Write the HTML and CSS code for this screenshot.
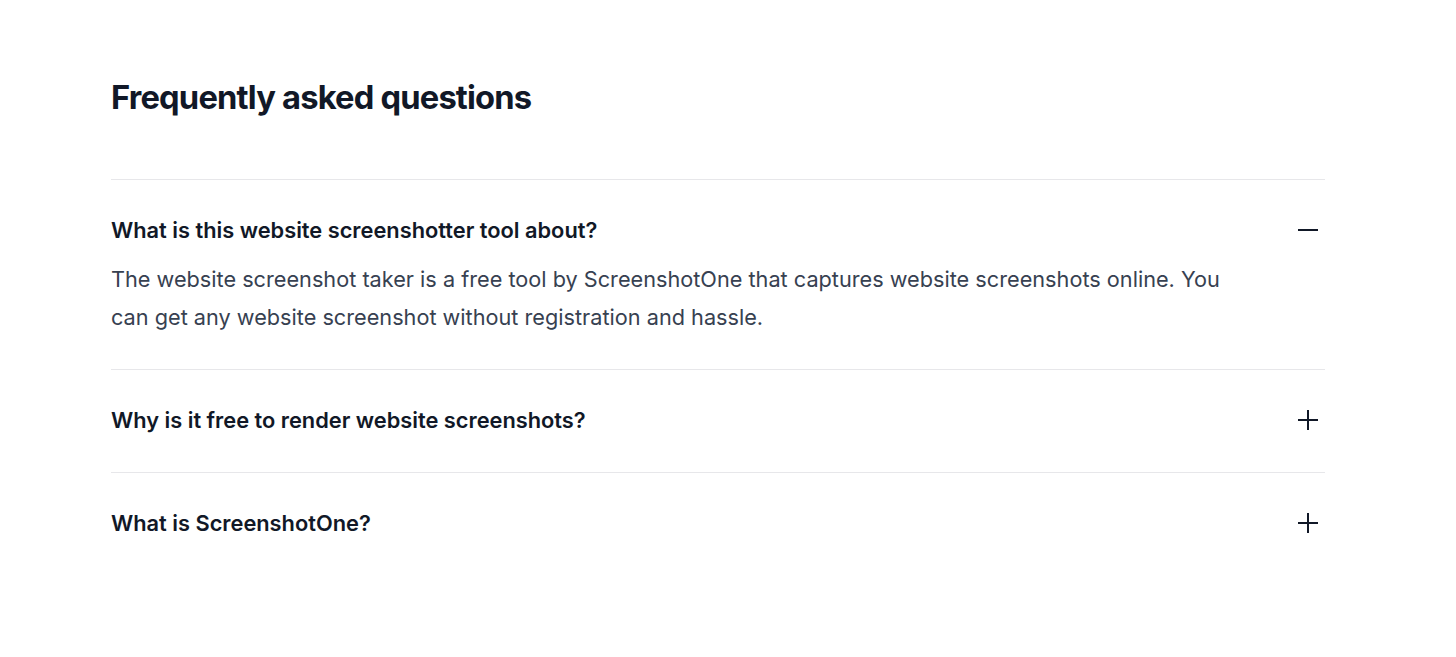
FILE: index.html
```html
<!DOCTYPE html>
<html lang="en">
<head>
<meta charset="utf-8">
<title>FAQ</title>
<link rel="stylesheet" href="styles.css">
</head>
<body>
<section class="faq">
  <h2 class="faq-title">Frequently asked questions</h2>
  <dl class="faq-list">
    <div class="faq-item">
      <dt class="faq-q">
        <span class="faq-q-text">What is this website screenshotter tool about?</span>
        <span class="faq-icon">
          <svg width="20" height="20" viewBox="0 0 20 20" fill="none" stroke="currentColor" stroke-width="2"><path d="M0 10H20"/></svg>
        </span>
      </dt>
      <dd class="faq-a">The website screenshot taker is a free tool by ScreenshotOne that captures website screenshots online. You can get any website screenshot without registration and hassle.</dd>
    </div>
    <div class="faq-item">
      <dt class="faq-q">
        <span class="faq-q-text">Why is it free to render website screenshots?</span>
        <span class="faq-icon">
          <svg width="20" height="20" viewBox="0 0 20 20" fill="none" stroke="currentColor" stroke-width="2"><path d="M0 10H20M10 0V20"/></svg>
        </span>
      </dt>
    </div>
    <div class="faq-item">
      <dt class="faq-q">
        <span class="faq-q-text">What is ScreenshotOne?</span>
        <span class="faq-icon">
          <svg width="20" height="20" viewBox="0 0 20 20" fill="none" stroke="currentColor" stroke-width="2"><path d="M0 10H20M10 0V20"/></svg>
        </span>
      </dt>
    </div>
  </dl>
</section>
</body>
</html>
```
FILE: styles.css
```css
html, body {
  margin: 0;
  padding: 0;
  background: #ffffff;
}
body {
  font-family: Inter, "Noto Sans", "Liberation Sans", sans-serif;
  color: #111827;
}
.faq {
  margin-left: 111px;
  width: 1214px;
  padding-top: 70px;
}
.faq-title {
  margin: 0;
  font-size: 32.7px;
  line-height: 54px;
  font-weight: 700;
  letter-spacing: -0.025em;
  color: #111827;
}
.faq-list {
  margin: 54.5px 0 0 0;
  border-top: 1px solid #e7e7ea;
}
.faq-item {
  padding: 31.5px 0 32.5px 0;
  border-bottom: 1px solid #e7e7ea;
}
.faq-item:last-child {
  border-bottom: none;
}
.faq-q {
  display: flex;
  align-items: center;
  justify-content: space-between;
  font-size: 21.8px;
  line-height: 38px;
  font-weight: 600;
  color: #111827;
}
.faq-icon {
  display: flex;
  align-items: center;
  height: 38px;
  margin-right: 7px;
  color: #111827;
}
.faq-icon svg {
  display: block;
}
.faq-a {
  margin: 11px 0 0 0;
  padding-right: 65px;
  font-size: 21.7px;
  line-height: 38px;
  font-weight: 400;
  color: #374151;
}
```
